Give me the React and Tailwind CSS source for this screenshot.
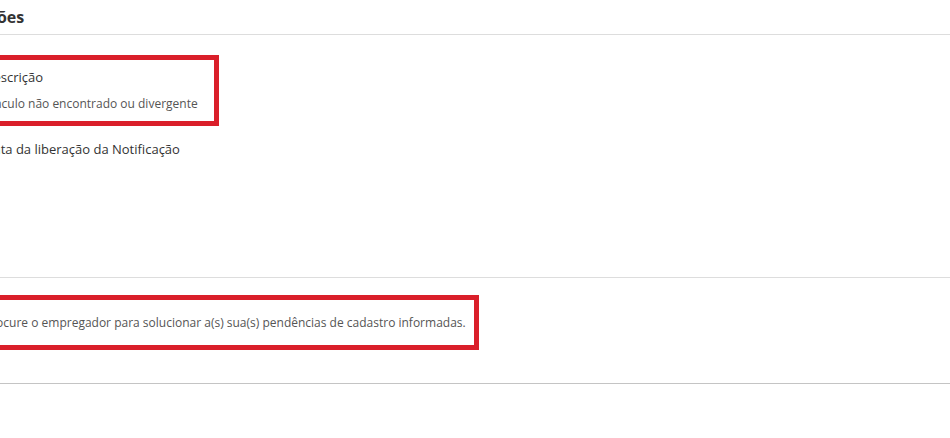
import React from 'react';

export default function App() {
  return (
    <div className="w-[950px] h-[438px] overflow-hidden bg-white" style={{ fontFamily: '"Open Sans", "Liberation Sans", sans-serif' }}>
      <div className="-ml-[24px] w-[974px]">
        {/* header */}
        <div className="h-[35px] border-b border-[#dddddd] flex items-center">
          <h2 className="text-[16px] font-bold text-[#333333] -ml-[51px] leading-none">Notificações</h2>
        </div>

        <div className="pt-[20px] h-[242px]">
          <div className="w-[243px] h-[71px] border-[5px] border-[#da1f2a] pl-[3px] pt-[8px]">
            <div className="text-[13px] text-[#333333] leading-[18px]">Descrição</div>
            <div className="text-[12px] text-[#555555] leading-[18px] mt-[9px]">Vínculo não encontrado ou divergente</div>
          </div>
          <div className="text-[13px] text-[#333333] leading-[18px] mt-[14px] pl-[8px]">Data da liberação da Notificação</div>
        </div>

        <div className="border-t border-[#dddddd] pt-[17px] h-[106px]">
          <div className="w-[503px] h-[55px] border-[5px] border-[#da1f2a] pl-[3px] flex items-center">
            <span className="text-[12px] text-[#555555]">Procure o empregador para solucionar a(s) sua(s) pendências de cadastro informadas.</span>
          </div>
        </div>

        <div className="border-t border-[#c4c4c4] h-[60px]" />
      </div>
    </div>
  );
}
